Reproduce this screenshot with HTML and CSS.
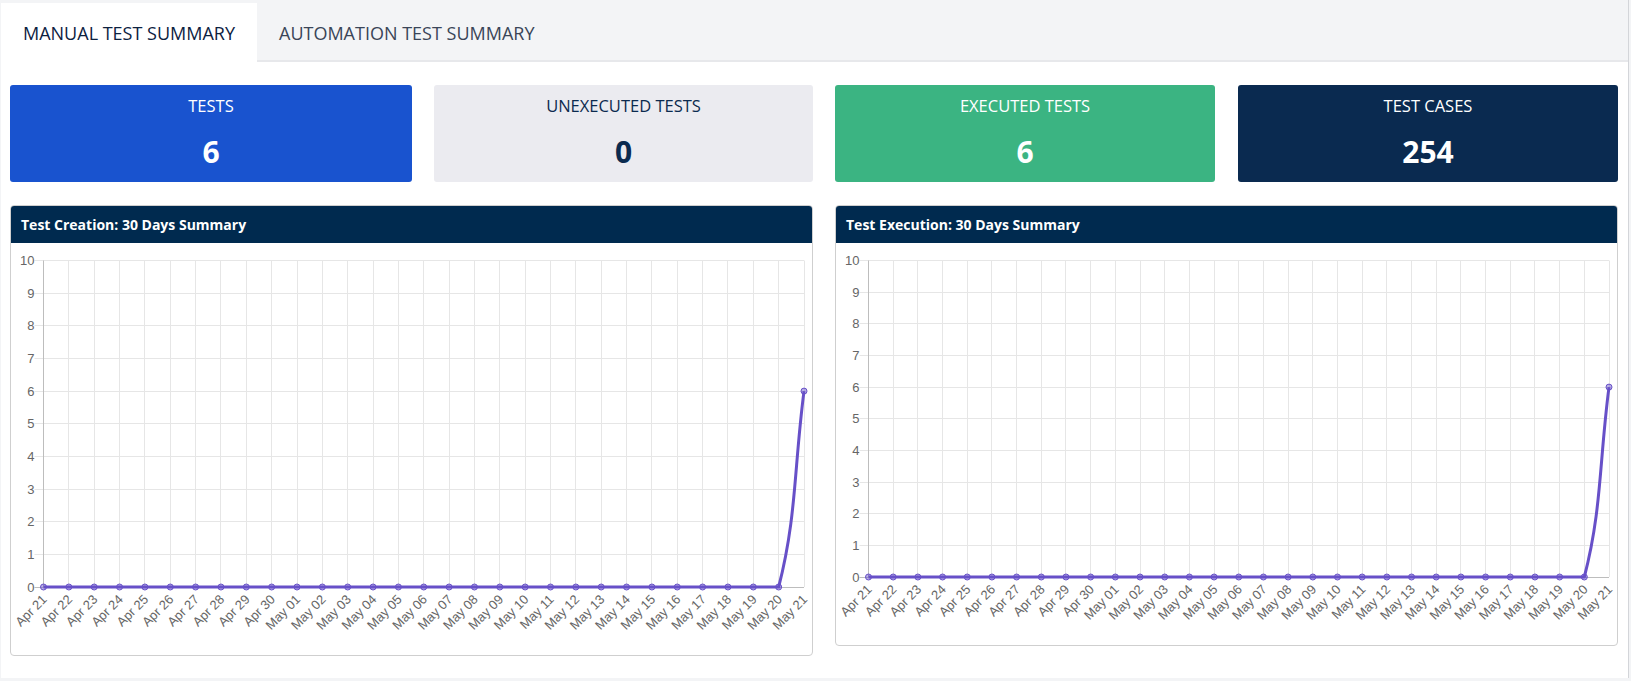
FILE: index.html
```html
<!DOCTYPE html>
<html lang="en">
<head>
<meta charset="utf-8">
<title>Test Summary</title>
<link rel="stylesheet" href="styles.css">
</head>
<body>
<div class="app">
  <div class="shell">
    <nav class="tabs">
      <div class="tab active">MANUAL TEST SUMMARY</div>
      <div class="tab">AUTOMATION TEST SUMMARY</div>
    </nav>
    <main class="main">
      <section class="col">
        <div class="cards cards-left">
          <div class="card card-blue">
            <div class="card-title">TESTS</div>
            <div class="card-value">6</div>
          </div>
          <div class="card card-gray">
            <div class="card-title">UNEXECUTED TESTS</div>
            <div class="card-value">0</div>
          </div>
        </div>
        <div class="panel">
          <div class="panel-header">Test Creation: 30 Days Summary</div>
          <div class="panel-body"><svg class="chart" xmlns="http://www.w3.org/2000/svg"></svg></div>
        </div>
      </section>
      <section class="col">
        <div class="cards cards-right">
          <div class="card card-green">
            <div class="card-title">EXECUTED TESTS</div>
            <div class="card-value">6</div>
          </div>
          <div class="card card-navy">
            <div class="card-title">TEST CASES</div>
            <div class="card-value">254</div>
          </div>
        </div>
        <div class="panel">
          <div class="panel-header">Test Execution: 30 Days Summary</div>
          <div class="panel-body"><svg class="chart" xmlns="http://www.w3.org/2000/svg"></svg></div>
        </div>
      </section>
    </main>
  </div>
</div>
<script src="script.js"></script>
</body>
</html>
```

FILE: styles.css
```css
* { box-sizing: border-box; }
html, body { margin: 0; padding: 0; }
body {
  background: #f3f4f6;
  font-family: "Open Sans", "Noto Sans", sans-serif;
  width: 1631px;
  height: 681px;
  overflow: hidden;
}
.app {
  height: 681px;
  padding: 0 2px 3px 1px;
}
.shell {
  height: 100%;
  display: flex;
  flex-direction: column;
  border-right: 1px solid #d3d5d9;
}
.tabs {
  display: flex;
  height: 62px;
  flex: 0 0 62px;
  padding-top: 3px;
  box-shadow: inset 0 -2px 0 #e7e8eb;
}
.tab {
  height: 59px;
  padding: 0 22px;
  display: flex;
  align-items: center;
  font-size: 18px;
  color: #3a4558;
  white-space: nowrap;
}
.tab.active {
  background: #fff;
  color: #0c213f;
}
.main {
  flex: 1;
  background: #fff;
  display: grid;
  grid-template-columns: 803px 1fr;
  column-gap: 22px;
  align-items: start;
  padding: 23px 10px 22px 9px;
}
.col {
  display: flex;
  flex-direction: column;
  gap: 23px;
}
.cards { display: grid; }
.cards-left { grid-template-columns: 402px 1fr; column-gap: 22px; }
.cards-right { grid-template-columns: 1fr 1fr; column-gap: 23px; }
.card {
  height: 97px;
  border-radius: 3px;
  text-align: center;
  padding-top: 9px;
  color: #fff;
}
.card-title {
  font-size: 16.5px;
  font-weight: 400;
  line-height: 24px;
}
.card-value {
  font-size: 30px;
  font-weight: 700;
  line-height: 40px;
  margin-top: 14px;
}
.card-blue { background: #1953cf; }
.card-gray { background: #ebebf0; color: #0b2a4f; }
.card-green { background: #3bb482; }
.card-navy { background: #0a2a50; }
.panel {
  border: 1px solid #cfcfcf;
  border-radius: 4px;
  overflow: hidden;
  background: #fff;
}
.panel-header {
  height: 37px;
  line-height: 37px;
  background: #002a4f;
  color: #fff;
  font-size: 14px;
  font-weight: 700;
  padding-left: 10px;
}
.panel-body {
  padding: 6px 0 5px;
}
.chart {
  display: block;
  width: 100%;
  aspect-ratio: 2 / 1;
}
.chart .tick-label {
  font-family: "Liberation Sans", Arial, sans-serif;
  font-size: 13px;
  fill: #666;
}
```

FILE: script.js
```js
(function () {
  var NS = 'http://www.w3.org/2000/svg';
  var labels = [];
  var d;
  for (d = 21; d <= 30; d++) labels.push('Apr ' + d);
  for (d = 1; d <= 21; d++) labels.push('May ' + (d < 10 ? '0' + d : d));
  var data = labels.map(function (_, i) { return i === labels.length - 1 ? 6 : 0; });
  var LINE = '#6750c8';

  function el(tag, attrs, parent) {
    var e = document.createElementNS(NS, tag);
    for (var k in attrs) e.setAttribute(k, attrs[k]);
    if (parent) parent.appendChild(e);
    return e;
  }
  function crisp(v) { return Math.round(v - 0.5) + 0.5; }

  function draw(svg) {
    var r = svg.getBoundingClientRect();
    var W = r.width, H = r.height;
    svg.setAttribute('viewBox', '0 0 ' + W + ' ' + H);
    var L = 32.5, R = W - 8, T = 11.5, B = H - 62.5;
    var n = labels.length;
    var dx = (R - L) / (n - 1);
    var dy = (B - T) / 10;
    var grid = el('g', {}, svg);
    var v, y, x, i;
    for (v = 0; v <= 10; v++) {
      y = crisp(B - v * dy);
      el('line', { x1: L - 9, x2: R, y1: y, y2: y, stroke: v === 0 ? '#bdbdbd' : '#e6e6e6', 'stroke-width': 1 }, grid);
      var t = el('text', { x: L - 9, y: y + 4.5, 'text-anchor': 'end', 'class': 'tick-label' }, svg);
      t.textContent = String(v);
    }
    for (i = 0; i < n; i++) {
      x = crisp(L + i * dx);
      el('line', { x1: x, x2: x, y1: T, y2: B, stroke: i === 0 ? '#bdbdbd' : '#e6e6e6', 'stroke-width': 1 }, grid);
      var g = el('g', { transform: 'translate(' + (L + i * dx + 1) + ',' + (B + 10) + ') rotate(-45)' }, svg);
      var tl = el('text', { x: 0, y: 0, dy: '0.35em', 'text-anchor': 'end', 'class': 'tick-label' }, g);
      tl.textContent = labels[i];
    }
    var pts = data.map(function (val, k) { return { x: L + k * dx, y: B - val * dy }; });
    var tension = 0.4;
    var cps = pts.map(function (p, k) {
      var prev = pts[k - 1] || p, next = pts[k + 1] || p;
      var d01 = Math.hypot(p.x - prev.x, p.y - prev.y);
      var d12 = Math.hypot(next.x - p.x, next.y - p.y);
      var s01 = d01 / (d01 + d12), s12 = d12 / (d01 + d12);
      if (isNaN(s01)) s01 = 0;
      if (isNaN(s12)) s12 = 0;
      var fa = tension * s01, fb = tension * s12;
      function cap(c) {
        return { x: Math.max(L, Math.min(R, c.x)), y: Math.max(T, Math.min(B, c.y)) };
      }
      return {
        prev: cap({ x: p.x - fa * (next.x - prev.x), y: p.y - fa * (next.y - prev.y) }),
        next: cap({ x: p.x + fb * (next.x - prev.x), y: p.y + fb * (next.y - prev.y) })
      };
    });
    var dstr = 'M' + pts[0].x + ',' + pts[0].y;
    for (i = 1; i < n; i++) {
      var a = cps[i - 1].next, b = cps[i].prev;
      dstr += ' C' + a.x + ',' + a.y + ' ' + b.x + ',' + b.y + ' ' + pts[i].x + ',' + pts[i].y;
    }
    el('path', { d: dstr, fill: 'none', stroke: LINE, 'stroke-width': 3 }, svg);
    pts.forEach(function (p) {
      el('circle', { cx: p.x, cy: p.y, r: 3, fill: 'rgba(103,80,200,0.45)', stroke: LINE, 'stroke-width': 1 }, svg);
    });
  }

  var charts = document.querySelectorAll('.chart');
  for (var c = 0; c < charts.length; c++) draw(charts[c]);
})();
```
